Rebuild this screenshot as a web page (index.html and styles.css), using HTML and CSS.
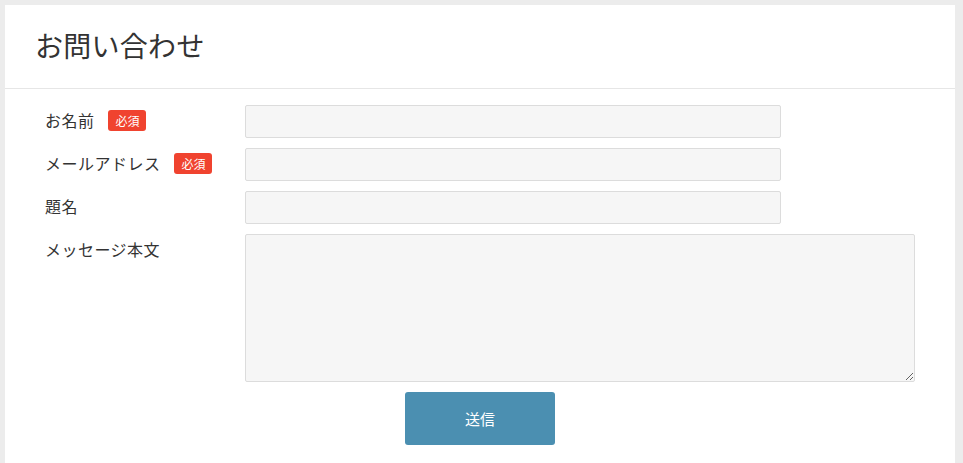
FILE: index.html
```html
<!DOCTYPE html>
<html lang="ja">
<head>
<meta charset="utf-8">
<title>お問い合わせ</title>
<link rel="stylesheet" href="styles.css">
</head>
<body>
<div class="card">
  <div class="card-header">
    <h1 class="title">お問い合わせ</h1>
  </div>
  <form class="form">
    <div class="row">
      <label class="label">お名前<span class="badge">必須</span></label>
      <div class="field"><input class="input" type="text"></div>
    </div>
    <div class="row">
      <label class="label">メールアドレス<span class="badge">必須</span></label>
      <div class="field"><input class="input" type="text"></div>
    </div>
    <div class="row">
      <label class="label">題名</label>
      <div class="field"><input class="input" type="text"></div>
    </div>
    <div class="row">
      <label class="label">メッセージ本文</label>
      <div class="field"><textarea class="textarea"></textarea></div>
    </div>
    <div class="actions">
      <button class="submit" type="button">送信</button>
    </div>
  </form>
</div>
</body>
</html>
```
FILE: styles.css
```css
html, body {
  margin: 0;
  padding: 0;
}
body {
  background: #ececec;
  padding: 5px 8px 0 5px;
  font-family: "Noto Sans CJK JP", "Noto Sans", sans-serif;
  color: #333;
}
.card {
  background: #fff;
  width: 950px;
  min-height: 470px;
}
.card-header {
  padding: 20px 30px 23px;
  border-bottom: 1px solid #e6e6e6;
}
.title {
  margin: 0;
  font-size: 28px;
  line-height: 40px;
  font-weight: 400;
  letter-spacing: 0.01em;
  color: #333;
}
.form {
  padding: 16px 40px 0;
}
.row {
  display: grid;
  grid-template-columns: 200px 1fr;
  margin-bottom: 10px;
}
.label {
  font-size: 16px;
  line-height: 31px;
  letter-spacing: 0.03em;
  color: #333;
  display: flex;
  align-items: center;
  align-self: start;
}
.badge {
  display: inline-block;
  margin-left: 14px;
  height: 21px;
  line-height: 21px;
  padding: 0 7px;
  border-radius: 3px;
  background: #f0432f;
  color: #fff;
  font-size: 12px;
  letter-spacing: 0;
}
.field {
  display: flex;
}
.input {
  box-sizing: border-box;
  width: 80%;
  height: 33px;
  margin: 0;
  padding: 4px 8px;
  background: #f6f6f6;
  border: 1px solid #dcdcdc;
  border-radius: 2px;
  font-family: inherit;
  font-size: 15px;
  outline: none;
}
.textarea {
  box-sizing: border-box;
  width: 100%;
  height: 148px;
  margin: 0;
  padding: 6px 8px;
  background: #f6f6f6;
  border: 1px solid #dcdcdc;
  border-radius: 2px;
  font-family: inherit;
  font-size: 15px;
  outline: none;
}
.actions {
  display: flex;
  justify-content: center;
}
.submit {
  width: 150px;
  height: 53px;
  border: none;
  border-radius: 3px;
  background: #4b8fb1;
  color: #fff;
  font-family: inherit;
  font-size: 15px;
  cursor: pointer;
}
```
